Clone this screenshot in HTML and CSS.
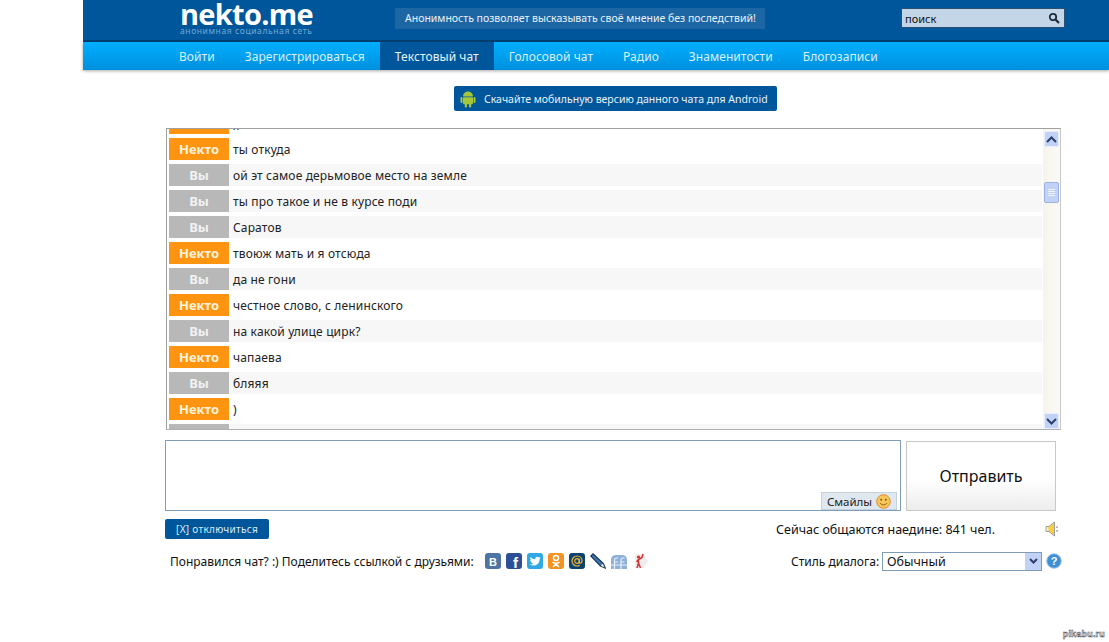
FILE: index.html
```html
<!DOCTYPE html>
<html lang="ru">
<head>
<meta charset="utf-8">
<title>nekto.me</title>
<link rel="stylesheet" href="styles.css">
</head>
<body>
<div class="page">
  <header class="site-head">
    <div class="top">
      <div class="logo">
        <div class="logo-name">nekto.me</div>
        <div class="logo-sub">анонимная социальная сеть</div>
      </div>
      <div class="hint">Анонимность позволяет высказывать своё мнение без последствий!</div>
      <div class="search">
        <span>поиск</span>
        <svg width="12" height="12" viewBox="0 0 12 12"><circle cx="5" cy="5" r="3.200" fill="none" stroke="#1c2c3c" stroke-width="1.800"/><path d="M7.500 7.500L11 11" stroke="#1c2c3c" stroke-width="2.200"/></svg>
      </div>
    </div>
    <nav class="nav">
      <a>Войти</a><a>Зарегистрироваться</a><a class="active">Текстовый чат</a><a>Голосовой чат</a><a>Радио</a><a>Знаменитости</a><a>Блогозаписи</a>
    </nav>
  </header>

  <main class="main">
    <div class="banner-row">
      <div class="banner">
        <svg width="16" height="18" viewBox="0 0 16 18"><path d="M3 6.500a5 5 0 0 1 10 0z" fill="#a4c639"/><rect x="3" y="7.200" width="10" height="7" rx="1" fill="#a4c639"/><rect x="0.500" y="7" width="2" height="6" rx="1" fill="#a4c639"/><rect x="13.500" y="7" width="2" height="6" rx="1" fill="#a4c639"/><rect x="4.800" y="13" width="2.200" height="4.500" rx="1" fill="#a4c639"/><rect x="9" y="13" width="2.200" height="4.500" rx="1" fill="#a4c639"/></svg>
        <span>Скачайте мобильную версию данного чата для Android</span>
      </div>
    </div>

    <section class="chat">
      <div class="log">
        <div class="msg them"><b></b><span>))</span></div>
        <div class="msg them"><b>Некто</b><span>ты откуда</span></div>
        <div class="msg me"><b>Вы</b><span>ой эт самое дерьмовое место на земле</span></div>
        <div class="msg me"><b>Вы</b><span>ты про такое и не в курсе поди</span></div>
        <div class="msg me"><b>Вы</b><span>Саратов</span></div>
        <div class="msg them"><b>Некто</b><span>твоюж мать и я отсюда</span></div>
        <div class="msg me"><b>Вы</b><span>да не гони</span></div>
        <div class="msg them"><b>Некто</b><span>честное слово, с ленинского</span></div>
        <div class="msg me"><b>Вы</b><span>на какой улице цирк?</span></div>
        <div class="msg them"><b>Некто</b><span>чапаева</span></div>
        <div class="msg me"><b>Вы</b><span>бляяя</span></div>
        <div class="msg them"><b>Некто</b><span>)</span></div>
        <div class="msg me"><b></b><span></span></div>
      </div>
      <div class="scrollbar">
        <div class="sb-btn"><svg width="11" height="7" viewBox="0 0 11 7"><path d="M1 6l4.500-4.500L10 6" fill="none" stroke="#2b3f6b" stroke-width="2"/></svg></div>
        <div class="sb-track"><div class="sb-thumb"><i></i><i></i><i></i><i></i></div></div>
        <div class="sb-btn"><svg width="11" height="7" viewBox="0 0 11 7"><path d="M1 1l4.500 4.500L10 1" fill="none" stroke="#2b3f6b" stroke-width="2"/></svg></div>
      </div>
    </section>

    <div class="compose">
      <div class="input-box">
        <div class="smiles">Смайлы
          <svg width="15" height="15" viewBox="0 0 15 15"><circle cx="7.500" cy="7.500" r="6.800" fill="#f6c65a" stroke="#e08a2c"/><circle cx="5.200" cy="5.800" r="1" fill="#8a5a10"/><circle cx="9.800" cy="5.800" r="1" fill="#8a5a10"/><path d="M4 9c1.500 2.400 5.500 2.400 7 0" fill="none" stroke="#8a5a10"/></svg>
        </div>
      </div>
      <div class="send">Отправить</div>
    </div>

    <div class="status-row">
      <div class="leave">[X] отключиться</div>
      <div class="online">Сейчас общаются наедине: 841 чел.</div>
      <svg class="speaker" width="15" height="16" viewBox="0 0 15 16"><path d="M1 5.500h3L9.500 1v14L4 10.500H1z" fill="#f7cf3f" stroke="#9c9c9c"/><path d="M1.500 6v4h2V6z" fill="#e8e8e8"/><path d="M12 5.500v1.200M12 9.300v1.200" stroke="#777" stroke-width="1.500"/></svg>
    </div>

    <div class="share-row">
      <div class="share-text">Понравился чат? :) Поделитесь ссылкой с друзьями:</div>
      <div class="icons">
        <svg width="16" height="16" viewBox="0 0 16 16"><rect width="16" height="16" rx="3" fill="#4c75a3"/><text x="8" y="12.500" class="ico-t">В</text></svg>
        <svg width="16" height="16" viewBox="0 0 16 16"><rect width="16" height="16" rx="3" fill="#2d4f96"/><text x="9.500" y="14.500" class="ico-f">f</text></svg>
        <svg width="16" height="16" viewBox="0 0 16 16"><rect width="16" height="16" rx="3" fill="#2fa8e4"/><path d="M3 11.500c4 2.500 9.500.5 9.700-5.500l1-1.200-1.300.3.800-1.300-1.400.7c-1.400-1.500-4-.3-3.500 1.800-2 0-3.500-1-4.700-2.300-.6 1.200-.3 2.300.6 3.100l-1-.2c0 1.100.8 2 1.900 2.300l-1 .1c.4.900 1.200 1.400 2.200 1.500-1 .8-2.200 1.100-3.300 1.200z" fill="#fff"/></svg>
        <svg width="16" height="16" viewBox="0 0 16 16"><rect width="16" height="16" rx="3" fill="#f29322"/><circle cx="8" cy="5" r="2.500" fill="none" stroke="#fff" stroke-width="1.500"/><path d="M4.500 9.200c2 1.400 5 1.400 7 0M8 10.200v1M5 14l3-3 3 3" fill="none" stroke="#fff" stroke-width="1.500"/></svg>
        <svg width="16" height="16" viewBox="0 0 16 16"><rect width="16" height="16" rx="3" fill="#0d4270"/><circle cx="8" cy="8" r="2.300" fill="none" stroke="#f2b632" stroke-width="1.200"/><path d="M10.300 5.800v3.200c0 2 2.700 1.400 2.700-1 0-3-2.200-5-5-5a5 5 0 0 0 0 10c1.200 0 2-.3 2.800-.8" fill="none" stroke="#f2b632" stroke-width="1.200"/></svg>
        <svg width="16" height="16" viewBox="0 0 16 16"><path d="M3 .8L.8 3l9.700 10 4.700 2-2-4.700z" fill="#3f78b5" stroke="#16324f" stroke-width="1.200"/><path d="M10.800 12.800l2-2 1.700 3.700z" fill="#eee"/></svg>
        <svg width="16" height="16" viewBox="0 0 16 16"><path d="M0 16V6.500A5 5 0 0 1 5 2h6a5 5 0 0 1 5 4.500V16z" fill="#8fb0d9"/><path d="M3.500 16V7a2 2 0 0 1 2-2H7M3.500 9H7M10 16V7a2 2 0 0 1 2-2h1.500M10 9h3.500M0 12h16" fill="none" stroke="#e6eef7" stroke-width="1.200"/></svg>
        <svg width="16" height="16" viewBox="0 0 16 16"><path d="M3 1h9l4 7-4 7H3z" fill="#eee"/><circle cx="6.500" cy="4" r="1.600" fill="#d8302f"/><path d="M6.500 6v4L5 15M6.500 10L8.500 15M6.500 6.500l3.500-2L11 1M6.500 6.500L4.500 9" fill="none" stroke="#d8302f" stroke-width="1.500"/></svg>
      </div>
      <div class="style-pick">
        <label class="style-label">Стиль диалога:</label>
        <div class="select">
          <span>Обычный</span>
          <div class="select-btn"><svg width="9" height="6" viewBox="0 0 9 6"><path d="M1 1l3.500 3.500L8 1" fill="none" stroke="#2b3f6b" stroke-width="2"/></svg></div>
        </div>
        <svg width="16" height="16" viewBox="0 0 16 16"><circle cx="8" cy="8" r="7.300" fill="#3d8fd6" stroke="#a9c8e6"/><text x="8" y="12" class="ico-q">?</text></svg>
      </div>
    </div>
  </main>
</div>
<div class="watermark">pikabu.ru</div>
</body>
</html>
```
FILE: styles.css
```css
* { box-sizing: border-box; }
html, body { margin: 0; height: 642px; overflow: hidden; background: #fff; }
body { font-family: "Noto Sans", "DejaVu Sans", sans-serif; font-size: 12px; color: #111; position: relative; }
.page { margin-left: 83px; }

.top { height: 42px; background: #00569b; border-bottom: 2px solid #003f73; display: flex; align-items: flex-start; padding-left: 97px; }
.logo { width: 215px; color: #fff; }
.logo-name { font-family: "Open Sans", sans-serif; font-weight: 700; font-size: 29px; line-height: 27px; letter-spacing: -0.7px; height: 26px; white-space: nowrap; }
.logo-sub { font-size: 8.500px; line-height: 9px; color: #6fa9d8; white-space: nowrap; letter-spacing: 0.6px; }
.hint { width: 370px; height: 21px; margin-top: 8px; background: #1c66a4; color: #e9f2f9; font-size: 10.500px; line-height: 21px; padding-left: 10px; white-space: nowrap; }
.search { width: 164px; height: 20px; margin: 8px 0 0 136px; background: #c3d6e8; border: 1px solid #2c4f74; display: flex; align-items: center; justify-content: space-between; padding: 0 4px 0 3px; font-size: 11px; color: #111; }

.nav { height: 28px; display: flex; padding-left: 81px; background: linear-gradient(#00afff, #0090de); box-shadow: 0 1px 3px rgba(0,0,0,.35); }
.nav a { padding: 0 15px; color: #d8f0ff; font-size: 12px; line-height: 29px; white-space: nowrap; letter-spacing: .06px; }
.nav a.active { background: #00569b; color: #e8f4fc; }

.main { padding-left: 82px; width: 985px; }
.banner-row { display: flex; padding: 16px 0 17px 289px; }
.banner { width: 323px; height: 25px; background: #00569b; border-radius: 2px; color: #e8f2fa; display: flex; align-items: center; gap: 8px; padding-left: 6px; font-size: 10.500px; white-space: nowrap; }

.chat { width: 895px; height: 302px; margin-left: 1px; border: 1px solid #a0a0a0; border-right-color: #c8c8c8; border-bottom-color: #b0b0b0; display: flex; overflow: hidden; }
.log { width: 875px; flex: none; overflow: hidden; padding-left: 2px; height: 300px; }
.msg { height: 22px; margin-bottom: 4px; display: flex; line-height: 24px; font-size: 12px; color: #222; letter-spacing: .15px; }
.msg:first-child { margin-top: -17px; }
.msg b { width: 60px; flex: none; text-align: center; color: #fff; font-size: 13px; font-weight: 700; line-height: 22px; letter-spacing: 0; }
.msg span { padding-left: 4px; flex: 1; white-space: nowrap; }
.them b { background: #ff9410; color: #fff3dc; }
.me b { background: #b8b8b8; color: #f2f2f2; }
.me { background: #f7f7f7; }

.scrollbar { width: 17px; flex: none; margin-left: 1px; background: linear-gradient(90deg, #f5f4ec, #fbfaf6); display: flex; flex-direction: column; align-items: center; justify-content: space-between; padding: 2px 0 0; }
.sb-btn { width: 15px; height: 16px; background: #c2d2f6; border: 1px solid #e8eefb; border-radius: 2px; display: flex; align-items: center; justify-content: center; }
.sb-track { flex: 1; width: 15px; padding-top: 35px; }
.sb-thumb { width: 15px; height: 21px; background: #c2d2f6; border: 1px solid #9db2e0; border-radius: 2px; display: flex; flex-direction: column; align-items: center; justify-content: center; gap: 1px; }
.sb-thumb i { display: block; width: 7px; height: 1px; background: #eef3ff; }

.compose { display: flex; gap: 5px; margin-top: 10px; height: 71px; }
.input-box { width: 736px; height: 71px; border: 1px solid #7f9db9; display: flex; align-items: flex-end; justify-content: flex-end; padding-right: 3px; }
.smiles { width: 76px; height: 18px; background: #dfe7ef; border: 1px solid #c4d2df; display: flex; align-items: center; justify-content: center; gap: 4px; font-size: 11.500px; color: #222; }
.send { width: 150px; height: 70px; margin-top: 1px; border: 1px solid #c8c8c8; background: linear-gradient(#fff 55%, #ececec); font-size: 16px; display: flex; align-items: center; justify-content: center; color: #111; }

.status-row { display: flex; align-items: center; height: 20px; margin-top: 8px; }
.leave { width: 104px; height: 20px; background: #00569b; border-radius: 2px; color: #dcebf7; font-size: 10px; line-height: 20px; text-align: center; letter-spacing: .3px; }
.online { margin-left: 507px; width: 269px; font-size: 12.500px; white-space: nowrap; }
.speaker { flex: none; }

.share-row { display: flex; align-items: center; height: 20px; margin-top: 12px; padding-left: 5px; }
.share-text { width: 315px; white-space: nowrap; font-size: 12px; }
.icons { display: flex; gap: 5px; width: 306px; }
.style-pick { display: flex; align-items: center; white-space: nowrap; }
.style-label { width: 91px; font-size: 12px; }
.select { width: 160px; height: 19px; border: 1px solid #7f9db9; display: flex; align-items: center; justify-content: space-between; padding-left: 4px; margin-right: 4px; font-size: 12.500px; }
.select-btn { width: 16px; height: 17px; background: #c2d2f6; display: flex; align-items: center; justify-content: center; }
.ico-t { font: 700 11px "Liberation Sans", sans-serif; fill: #fff; text-anchor: middle; }
.ico-f { font: 700 15px "Liberation Sans", sans-serif; fill: #fff; text-anchor: middle; }
.ico-q { font: 700 11px "Liberation Sans", sans-serif; fill: #fff; text-anchor: middle; }

.watermark { position: absolute; right: 4px; bottom: 3px; font: 700 9px "Liberation Sans", sans-serif; color: #fff; -webkit-text-stroke: 0.5px #445; letter-spacing: 0.2px; }
```
